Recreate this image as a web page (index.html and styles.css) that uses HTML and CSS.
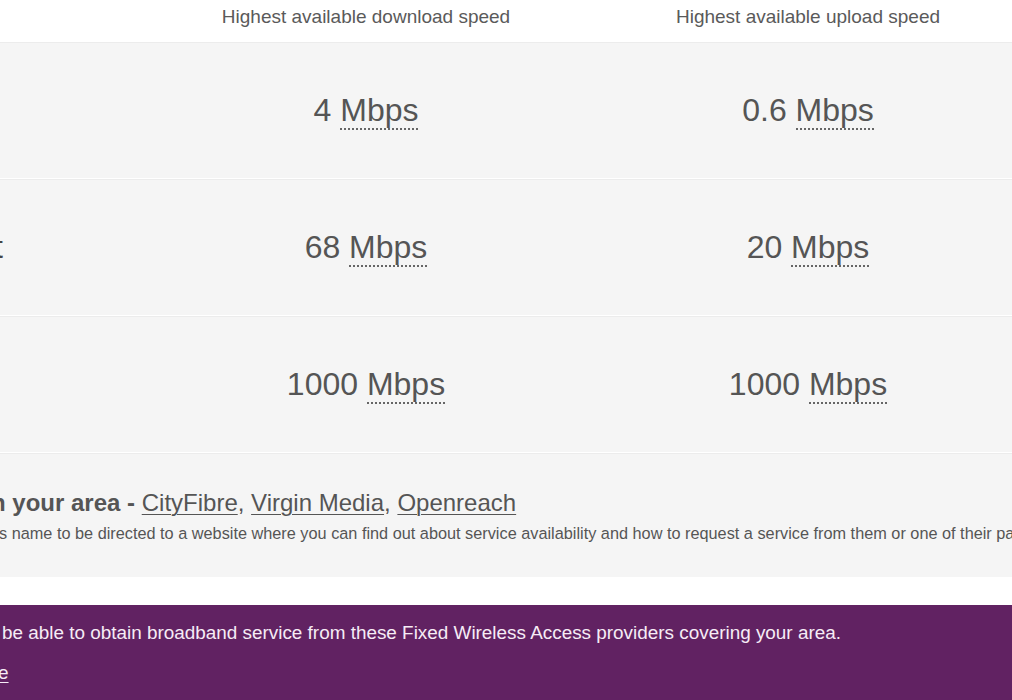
FILE: index.html
```html
<!DOCTYPE html>
<html lang="en">
<head>
<meta charset="utf-8">
<title>Broadband speeds</title>
<link rel="stylesheet" href="styles.css">
</head>
<body>
<div class="page">
  <div class="speeds">
    <div class="head-row">
      <div class="cell label-cell"></div>
      <div class="cell head">Highest available download speed</div>
      <div class="cell head">Highest available upload speed</div>
    </div>
    <div class="row">
      <div class="cell label-cell"></div>
      <div class="cell value">4 <abbr title="Megabits per second">Mbps</abbr></div>
      <div class="cell value">0.6 <abbr title="Megabits per second">Mbps</abbr></div>
    </div>
    <div class="row">
      <div class="cell label-cell"><span class="label">Superfast</span></div>
      <div class="cell value">68 <abbr title="Megabits per second">Mbps</abbr></div>
      <div class="cell value">20 <abbr title="Megabits per second">Mbps</abbr></div>
    </div>
    <div class="row">
      <div class="cell label-cell"></div>
      <div class="cell value">1000 <abbr title="Megabits per second">Mbps</abbr></div>
      <div class="cell value">1000 <abbr title="Megabits per second">Mbps</abbr></div>
    </div>
  </div>

  <div class="providers">
    <h3 class="providers-title"><strong>n your area - </strong><a href="#">CityFibre</a>, <a href="#">Virgin Media</a>, <a href="#">Openreach</a></h3>
    <p class="providers-note">s name to be directed to a website where you can find out about service availability and how to request a service from them or one of their partners.</p>
  </div>

  <div class="fwa">
    <p class="fwa-text">be able to obtain broadband service from these Fixed Wireless Access providers covering your area.</p>
    <p class="fwa-link"><a href="#">e</a></p>
  </div>
</div>
</body>
</html>
```

FILE: styles.css
```css
html, body {
  margin: 0;
  padding: 0;
  background: #ffffff;
  overflow: hidden;
}

body {
  font-family: "Liberation Sans", Arial, sans-serif;
  color: #555555;
}

.page {
  width: 1012px;
  overflow: hidden;
}

.speeds {
  margin-left: -134px;
  width: 1180px;
}

.head-row,
.row {
  display: grid;
  grid-template-columns: 279px 442px 442px;
}

.head-row {
  height: 42px;
  background: #ffffff;
}

.head {
  font-size: 19px;
  line-height: 24px;
  padding-top: 5px;
  text-align: center;
  color: #5a5a5a;
}

.row {
  height: 135px;
  background: #f5f5f5;
  border-top: 1px solid #ececec;
  border-bottom: 1px solid #ffffff;
  align-items: center;
}

.label {
  font-size: 32px;
  color: #444444;
}

.value {
  font-size: 32px;
  line-height: 40px;
  padding-bottom: 2px;
  text-align: center;
  color: #555555;
}

.value abbr {
  text-decoration: none;
  border-bottom: 2px dotted #666666;
  padding-bottom: 0;
}

.providers {
  background: #f5f5f5;
  border-top: 1px solid #ececec;
  height: 124px;
  padding-top: 34px;
  box-sizing: border-box;
}

.providers-title {
  margin: 0;
  font-size: 24px;
  line-height: 30px;
  font-weight: normal;
  white-space: nowrap;
  text-indent: -9px;
  color: #555555;
}

.providers-title strong {
  font-weight: bold;
}

.providers-title a {
  color: #555555;
  text-decoration: underline;
  text-underline-offset: 3px;
  text-decoration-thickness: 1px;
}

.providers-note {
  margin: 2px 0 0;
  font-size: 16.3px;
  line-height: 26px;
  white-space: nowrap;
  text-indent: -1px;
  color: #555555;
}

.fwa {
  margin-top: 28px;
  background: #612262;
  height: 120px;
  padding-top: 15px;
  box-sizing: border-box;
  color: #f6ecf6;
}

.fwa-text {
  margin: 0;
  font-size: 18.9px;
  line-height: 26px;
  white-space: nowrap;
  text-indent: 2px;
}

.fwa-link {
  margin: 14px 0 0;
  font-size: 19px;
  line-height: 26px;
  text-indent: -2px;
}

.fwa-link a {
  color: #f6ecf6;
  text-decoration: underline;
  text-underline-offset: 3px;
}
```
